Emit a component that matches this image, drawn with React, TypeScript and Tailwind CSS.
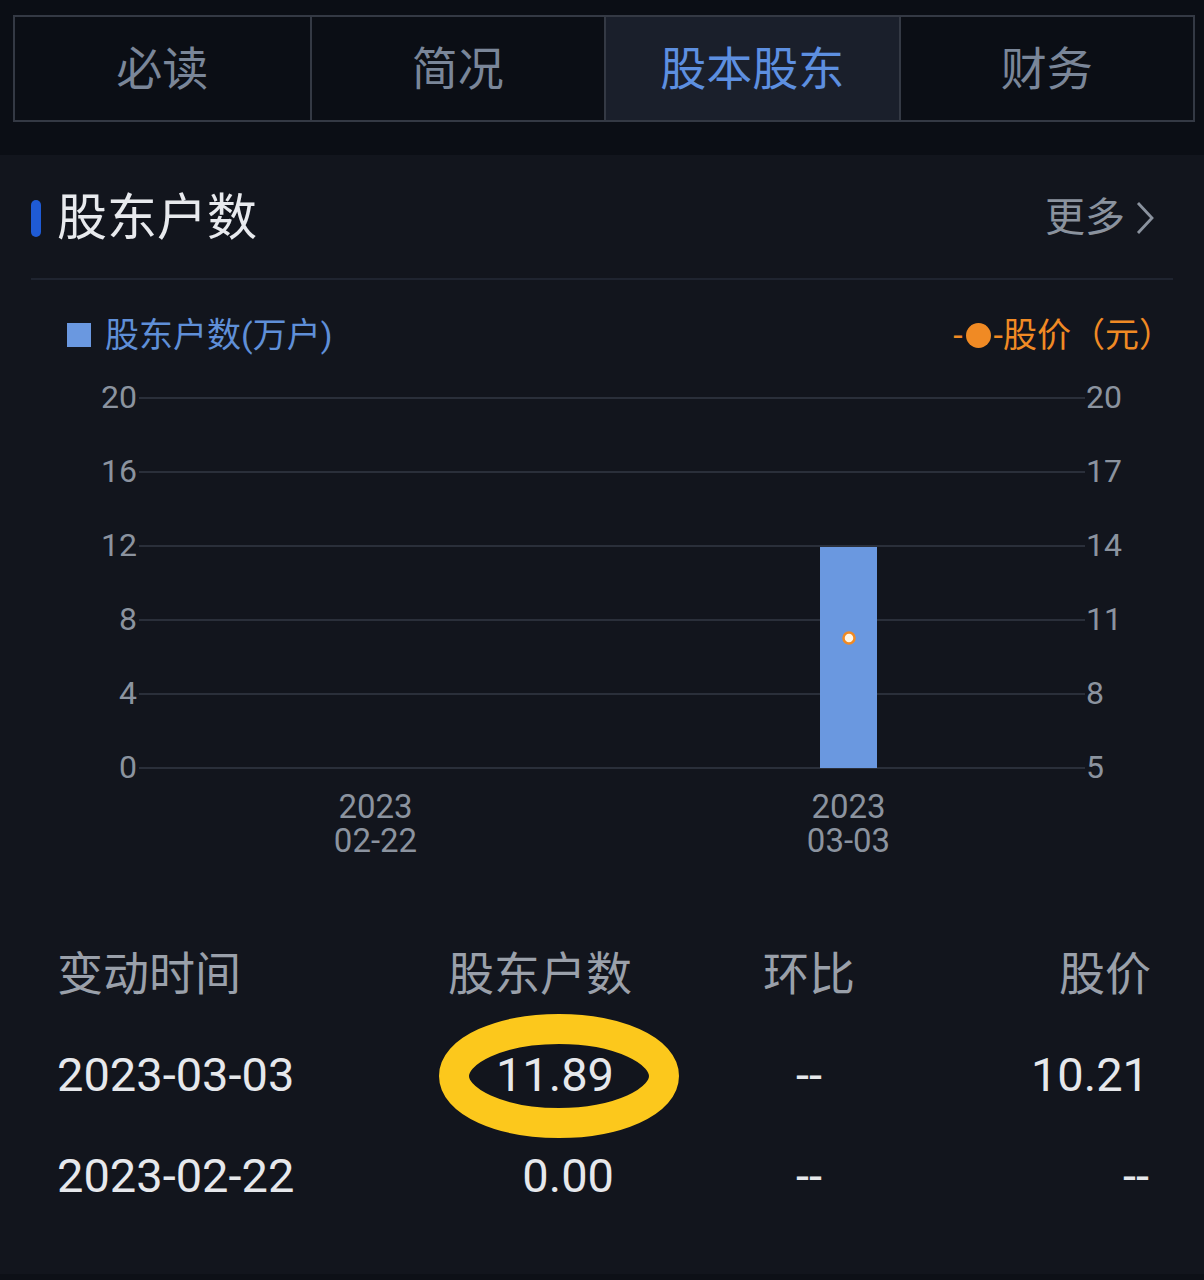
import React from 'react';

const font = { fontFamily: "Roboto, 'Noto Sans CJK SC', sans-serif" };

const tabs = ['必读', '简况', '股本股东', '财务'];

const leftTicks = [20, 16, 12, 8, 4, 0];
const rightTicks = [20, 17, 14, 11, 8, 5];

const rows = [
  { date: '2023-03-03', count: '11.89', ratio: '--', price: '10.21', mark: true },
  { date: '2023-02-22', count: '0.00', ratio: '--', price: '--', mark: false },
];

const Chart = () => {
  // svg y = page y - 353
  const gridY = [46, 120, 194, 268, 342, 416];
  return (
    <div>
      <svg width={1204} height={438} viewBox="0 0 1204 438" className="block" style={font}>
        {gridY.map((y, i) => (
          <g key={i}>
            <line x1={139} x2={1085} y1={y} y2={y} stroke="#2a2f3a" strokeWidth={2} />
            <text x={137} y={y + 10} textAnchor="end" fontSize={32} fill="#8b939f">
              {leftTicks[i]}
            </text>
            <text x={1086} y={y + 10} textAnchor="start" fontSize={32} fill="#8b939f">
              {rightTicks[i]}
            </text>
          </g>
        ))}
        <rect x={820} y={195} width={57} height={221} fill="#6a98e0" />
        <circle cx={849} cy={286} r={5.5} fill="#fff6e6" stroke="#f08a24" strokeWidth={2.5} />
      </svg>
      <div className="grid grid-cols-2 ml-[139px] w-[946px] text-[33px] leading-[34px] text-[#8b939f]">
        <div className="text-center">
          <div>2023</div>
          <div>02-22</div>
        </div>
        <div className="text-center">
          <div>2023</div>
          <div>03-03</div>
        </div>
      </div>
    </div>
  );
};

export default function App() {
  return (
    <div className="w-[1204px] h-[1280px] bg-[#12151d] overflow-hidden" style={font}>
      {/* tabs */}
      <div className="h-[155px] bg-[#0b0e15] pt-[15px] pl-[13px] pr-[9px]">
        <div className="grid grid-cols-4 h-[107px] border-2 border-[#343944]">
          {tabs.map((t, i) => (
            <div
              key={t}
              className={`flex items-center justify-center text-[46px] leading-none ${
                i > 0 ? 'border-l-2 border-[#343944]' : ''
              } ${i === 2 ? 'bg-[#1a1f2b] text-[#5d8fe0]' : 'text-[#7a8699]'}`}
            >
              {t}
            </div>
          ))}
        </div>
      </div>

      {/* section header */}
      <div className="mx-[31px] h-[125px] border-b-2 border-[#1f2430] flex items-center justify-between pt-[3px]">
        <div className="flex items-center">
          <div className="w-[10px] h-[37px] rounded-full bg-[#1f5bd5]" />
          <div className="ml-[16px] text-[50px] leading-none text-[#e8eaee]">股东户数</div>
        </div>
        <div className="flex items-center gap-[10px] text-[40px] leading-none text-[#8a929e] mr-[18px]">
          <span>更多</span>
          <svg width={20} height={36} viewBox="0 0 20 36">
            <polyline points="3,3 17,18 3,33" fill="none" stroke="#8a929e" strokeWidth={2.8} />
          </svg>
        </div>
      </div>

      {/* legend */}
      <div className="mt-[38px] h-[34px] pl-[67px] pr-[31px] flex items-center justify-between text-[34px] leading-none">
        <div className="flex items-center text-[#5f8fd8]">
          <span className="w-[24px] h-[24px] bg-[#6a98e0] mr-[14px]" />
          <span>股东户数(万户)</span>
        </div>
        <div className="flex items-center text-[#f08a24]">
          <span>-</span>
          <span className="w-[25px] h-[25px] rounded-full bg-[#f08a24] mx-[3px]" />
          <span>-股价（元）</span>
        </div>
      </div>

      <Chart />

      {/* table */}
      <div className="pt-[65px] pl-[57px] pr-[53px]">
        <div className="flex h-[101px] items-center text-[46px] leading-none text-[#9aa0aa]">
          <div className="w-[343px]">变动时间</div>
          <div className="w-[232px] text-right">股东户数</div>
          <div className="w-[354px] text-center">环比</div>
          <div className="w-[165px] text-right">股价</div>
        </div>
        {rows.map((r) => (
          <div key={r.date} className="flex h-[101px] items-center text-[47px] leading-none text-[#e6e8ec]">
            <div className="w-[343px]">{r.date}</div>
            <div className="w-[232px] text-right pr-[18px] relative self-stretch flex items-center justify-end">
              {r.mark && (
                <svg
                  width={240}
                  height={124}
                  viewBox="0 0 240 124"
                  className="absolute left-[39px] top-[-10px] pointer-events-none"
                >
                  <ellipse cx={120} cy={62} rx={105} ry={47} fill="none" stroke="#fcc81c" strokeWidth={30} />
                </svg>
              )}
              <span className="relative">{r.count}</span>
            </div>
            <div className="w-[354px] text-center">{r.ratio}</div>
            <div className="w-[165px] text-right pr-[2px]">{r.price}</div>
          </div>
        ))}
      </div>
      <div className="h-[48px]" />
      <div className="h-[6px] bg-[#0d1017]" />
    </div>
  );
}
